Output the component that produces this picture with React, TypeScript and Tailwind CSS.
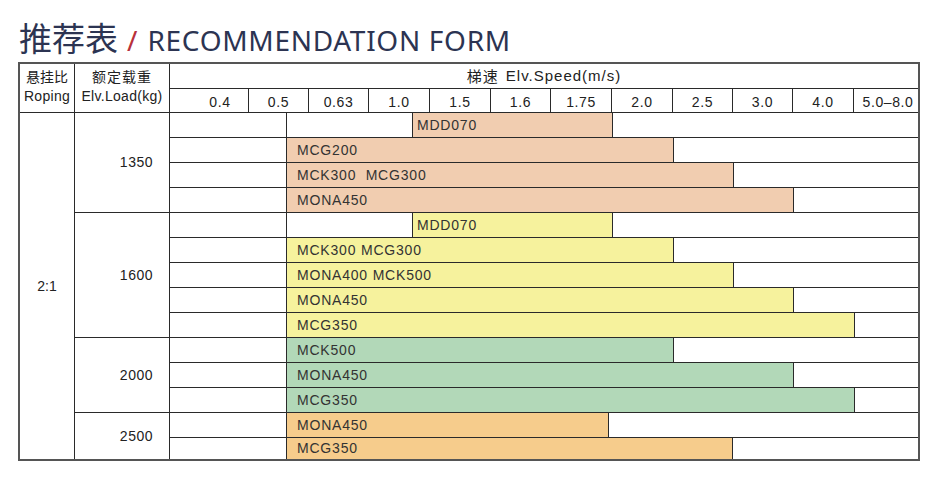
import type { CSSProperties } from "react";

const speeds = [
  { v: "0.4", cls: "w-[79px] pl-[22px] border-r" },
  { v: "0.5", cls: "w-[60px] border-r" },
  { v: "0.63", cls: "w-[60px] border-r" },
  { v: "1.0", cls: "w-[61px] border-r" },
  { v: "1.5", cls: "w-[61px] border-r" },
  { v: "1.6", cls: "w-[60px] border-r" },
  { v: "1.75", cls: "w-[61px] border-r" },
  { v: "2.0", cls: "w-[61px] border-r" },
  { v: "2.5", cls: "w-[60px] border-r" },
  { v: "3.0", cls: "w-[60px] border-r" },
  { v: "4.0", cls: "w-[61px] border-r" },
  { v: "5.0–8.0", cls: "w-[64px] pl-[4px] tracking-[0.3px]" },
];

type Row = { name: string; end: number; late?: boolean };

const groups: { load: string; color: string; rows: Row[] }[] = [
  {
    load: "1350",
    color: "bg-[#f1cdb0]",
    rows: [
      { name: "MDD070", end: 612, late: true },
      { name: "MCG200", end: 673 },
      { name: "MCK300\u00a0\u00a0MCG300", end: 733 },
      { name: "MONA450", end: 793 },
    ],
  },
  {
    load: "1600",
    color: "bg-[#f6f29d]",
    rows: [
      { name: "MDD070", end: 612, late: true },
      { name: "MCK300 MCG300", end: 673 },
      { name: "MONA400 MCK500", end: 733 },
      { name: "MONA450", end: 793 },
      { name: "MCG350", end: 854 },
    ],
  },
  {
    load: "2000",
    color: "bg-[#b2d8b8]",
    rows: [
      { name: "MCK500", end: 673 },
      { name: "MONA450", end: 793 },
      { name: "MCG350", end: 854 },
    ],
  },
  {
    load: "2500",
    color: "bg-[#f6cc8c]",
    rows: [
      { name: "MONA450", end: 608 },
      { name: "MCG350", end: 732 },
    ],
  },
];

const sans = "font-['Liberation_Sans','Noto_Sans_CJK_SC',sans-serif]";
const cjk = "font-['Noto_Sans_CJK_SC',sans-serif]";

const App = () => {
  return (
    <div className={`w-[940px] h-[479px] bg-white text-[#222] ${sans}`}>
      <div className="h-[62px] pt-[21px] pl-[19px] flex items-baseline">
        <span className={`${cjk} text-[33px] leading-[33px] text-[#2c3452]`}>推荐表</span>
        <span className="font-['Noto_Sans',sans-serif] text-[28px] leading-[33px] text-[#b8313b] ml-[9px] mr-[10px]">/</span>
        <span className="font-['Noto_Sans',sans-serif] text-[28px] leading-[33px] text-[#2c3452] tracking-[0.7px]">RECOMMENDATION FORM</span>
      </div>

      <div className="ml-[18px] w-[902px] border-2 border-[#555] [&_*]:border-[#2a2a2a]">
        {/* header */}
        <div className="flex border-b">
          <div className="w-[55px] flex-none border-r flex flex-col items-center justify-center pb-[4px] text-[14px] leading-[20px] tracking-[0.3px]">
            <span className={`${cjk} tracking-[0px]`}>悬挂比</span>
            <span>Roping</span>
          </div>
          <div className="w-[95px] flex-none border-r flex flex-col items-center justify-center pb-[4px] text-[14px] leading-[20px] tracking-[0.3px]">
            <span className={`${cjk} tracking-[1px]`}>额定载重</span>
            <span>Elv.Load(kg)</span>
          </div>
          <div className="flex-1 flex flex-col">
            <div className="h-[25px] border-b flex items-center justify-center text-[15px] tracking-[1px]">
              <span className={`${cjk} mr-[7px]`}>梯速</span>Elv.Speed(m/s)
            </div>
            <div className="h-[23px] flex">
              {speeds.map((s) => (
                <div key={s.v} className={`${s.cls} flex-none flex items-center justify-center pt-[3px] text-[14px] tracking-[0.6px]`}>
                  {s.v}
                </div>
              ))}
            </div>
          </div>
        </div>

        {/* body */}
        <div className="flex">
          <div className="w-[55px] flex-none border-r flex items-center justify-center text-[14px]">2:1</div>
          <div className="flex-1 flex flex-col">
            {groups.map((g, gi) => {
              const lastGroup = gi === groups.length - 1;
              return (
                <div key={g.load} className="flex">
                  <div className={`w-[95px] flex-none border-r flex items-center justify-end pr-[16px] text-[14px] tracking-[0.5px] ${lastGroup ? "" : "border-b"}`}>
                    {g.load}
                  </div>
                  <div className="flex-1 flex flex-col">
                    {g.rows.map((r, ri) => {
                      const lastRow = lastGroup && ri === g.rows.length - 1;
                      const width: CSSProperties = { width: r.late ? r.end - 412 : r.end - 286 };
                      return (
                        <div key={ri} className={`flex ${lastRow ? "h-[21px]" : "h-[25px] border-b"}`}>
                          <div className="w-[117px] flex-none border-r" />
                          {r.late && <div className="w-[126px] flex-none border-r" />}
                          <div
                            style={width}
                            className={`${g.color} flex-none border-r flex items-center whitespace-pre text-[14px] tracking-[0.8px] text-[#333] ${r.late ? "pl-[4px]" : "pl-[10px]"}`}
                          >
                            {r.name}
                          </div>
                          <div className="flex-1" />
                        </div>
                      );
                    })}
                  </div>
                </div>
              );
            })}
          </div>
        </div>
      </div>
    </div>
  );
};

export default App;
